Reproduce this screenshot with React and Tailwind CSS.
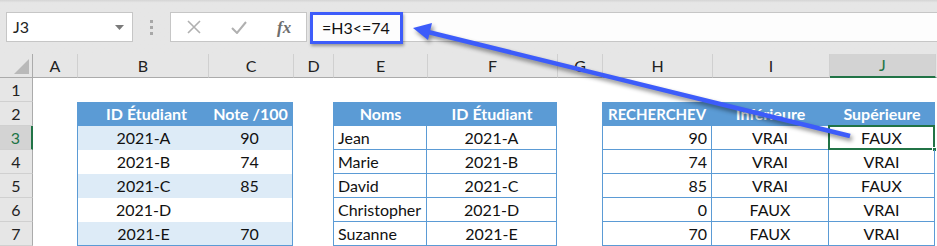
import React from "react";

const COLS =
  "grid-cols-[33px_45px_131px_85px_40px_94px_130px_45px_110px_117px_106px_1fr]";
const FONT = { fontFamily: "Lato, 'Open Sans', sans-serif" };

const letters = ["A", "B", "C", "D", "E", "F", "G", "H", "I", "J"];

function ColHeader({ l }) {
  const sel = l === "J";
  return (
    <div
      className={
        "flex items-center justify-center text-[16px] text-[#222] border-r border-[#d0d0d0] " +
        (sel
          ? "bg-[#d3d3d3] border-b-2 border-b-[#217346] text-[#217346]"
          : "bg-[#e6e6e6] border-b border-b-[#ababab]")
      }
    >
      {l}
    </div>
  );
}

function RowHeader({ n }) {
  const sel = n === 3;
  return (
    <div
      className={
        "h-full flex items-center justify-center text-[16px] border-b border-[#d0d0d0] " +
        (sel
          ? "bg-[#d3d3d3] border-r-2 border-r-[#217346] text-[#217346]"
          : "bg-[#e6e6e6] border-r border-r-[#ababab] text-[#222]")
      }
    >
      {n}
    </div>
  );
}

const t1 = [
  ["2021-A", "90"],
  ["2021-B", "74"],
  ["2021-C", "85"],
  ["2021-D", ""],
  ["2021-E", "70"],
];
const t2 = [
  ["Jean", "2021-A"],
  ["Marie", "2021-B"],
  ["David", "2021-C"],
  ["Christopher", "2021-D"],
  ["Suzanne", "2021-E"],
];
const t3 = [
  ["90", "VRAI", "FAUX"],
  ["74", "VRAI", "VRAI"],
  ["85", "VRAI", "FAUX"],
  ["0", "FAUX", "VRAI"],
  ["70", "FAUX", "VRAI"],
];

export default function App() {
  return (
    <div
      className="relative w-[937px] h-[246px] overflow-hidden bg-white text-[#111]"
      style={FONT}
    >
      {/* Formula bar area */}
      <div className="h-[54px] bg-gradient-to-b from-[#d4d4d4] via-[#e6e6e6] to-[#e6e6e6] from-0% via-[5%] flex items-start pt-[12px] pl-[6px]">
        <div className="w-[127px] h-[30px] bg-white border border-[#c6c6c6] flex items-center justify-between pl-[6px] pr-[8px] text-[16px] text-[#222]">
          <span>J3</span>
          <svg width="9" height="5" viewBox="0 0 9 5">
            <path d="M0 0 H9 L4.5 5 Z" fill="#7a7a7a" />
          </svg>
        </div>
        <div className="w-[37px] h-[30px] flex flex-col items-center justify-center gap-[3px]">
          <div className="w-[3px] h-[3px] bg-[#a8a8a8]" />
          <div className="w-[3px] h-[3px] bg-[#a8a8a8]" />
          <div className="w-[3px] h-[3px] bg-[#a8a8a8]" />
        </div>
        <div className="w-[137px] h-[30px] bg-white border border-[#c6c6c6] flex items-center">
          <div className="w-[46px] flex justify-center">
            <svg width="14" height="14" viewBox="0 0 14 14">
              <path d="M1 1 L13 13 M13 1 L1 13" stroke="#b0b0b0" strokeWidth="1.6" />
            </svg>
          </div>
          <div className="w-[46px] flex justify-center">
            <svg width="16" height="13" viewBox="0 0 16 13">
              <path d="M1 7 L6 12 L15 1" stroke="#b0b0b0" strokeWidth="2" fill="none" />
            </svg>
          </div>
          <div
            className="w-[44px] flex justify-center text-[17px] italic font-bold text-[#6e6e6e] leading-none"
            style={{ fontFamily: "'Liberation Serif', serif" }}
          >
            fx
          </div>
        </div>
        <div className="flex-1 h-[30px] ml-[3px] bg-[#fdfdfd] border-y border-[#c6c6c6] relative">
          <div className="absolute left-0 top-[-1px] w-[93px] h-[32px] border-[3px] border-[#3d5cfa] flex items-center pl-[9px] text-[16px] text-[#111] shadow-[1px_2px_3px_rgba(0,0,0,0.35)]">
            =H3&lt;=74
          </div>
        </div>
      </div>

      {/* Grid */}
      <div className={"grid " + COLS + " grid-rows-[repeat(8,24px)]"}>
        {/* corner */}
        <div className="bg-[#e6e6e6] border-r border-b border-[#ababab] relative">
          <svg className="absolute right-[3px] bottom-[3px]" width="15" height="15" viewBox="0 0 15 15">
            <path d="M15 0 V15 H0 Z" fill="#b9b9b9" />
          </svg>
        </div>
        {letters.map((l) => (
          <ColHeader key={l} l={l} />
        ))}
        <div className="bg-[#e6e6e6] border-b border-[#ababab]" />

        {[1, 2, 3, 4, 5, 6, 7].map((n) => (
          <div key={n} className="col-start-1" style={{ gridRowStart: n + 1 }}>
            <RowHeader n={n} />
          </div>
        ))}

        {/* Table 1 */}
        <div className="col-start-3 col-span-2 row-start-3 row-span-6 grid grid-cols-[131px_85px] grid-rows-[repeat(6,24px)] -ml-px">
          <div className="col-span-2 bg-[#5b9bd5] grid grid-cols-[131px_85px] text-white font-bold text-[16px]">
            <div className="flex items-center justify-center pl-[8px]">ID Étudiant</div>
            <div className="flex items-center justify-center">Note /100</div>
          </div>
          {t1.map((r, i) => (
            <div
              key={i}
              className={
                "col-span-2 grid grid-cols-[131px_85px] text-[16px] border-x border-[#5b9bd5] " +
                (i % 2 === 0 ? "bg-[#ddebf7] " : "bg-white ") +
                (i === 4 ? "border-b" : "")
              }
            >
              <div className="flex items-center justify-center">{r[0]}</div>
              <div className="flex items-center justify-center pr-[4px]">{r[1]}</div>
            </div>
          ))}
        </div>

        {/* Table 2 */}
        <div className="col-start-6 col-span-2 row-start-3 row-span-6 grid grid-cols-[94px_130px] grid-rows-[repeat(6,24px)] -ml-px">
          <div className="bg-[#5b9bd5] text-white font-bold text-[16px] flex items-center justify-center border-l border-[#5b9bd5]">
            Noms
          </div>
          <div className="bg-[#5b9bd5] text-white font-bold text-[16px] flex items-center justify-center">
            ID Étudiant
          </div>
          {t2.map((r, i) => (
            <React.Fragment key={i}>
              <div className="flex items-center pl-[4px] text-[16px] border-l border-r border-b border-[#5b9bd5]">
                {r[0]}
              </div>
              <div className="flex items-center justify-center text-[16px] border-r border-b border-[#5b9bd5]">
                {r[1]}
              </div>
            </React.Fragment>
          ))}
        </div>

        {/* Table 3 */}
        <div className="col-start-9 col-span-3 row-start-3 row-span-6 grid grid-cols-[110px_117px_106px] grid-rows-[repeat(6,24px)] -ml-px">
          <div className="bg-[#5b9bd5] text-white font-bold text-[15px] flex items-center pl-[6px]">
            RECHERCHEV
          </div>
          <div className="bg-[#5b9bd5] text-white font-bold text-[16px] flex items-center justify-center">
            Inférieure
          </div>
          <div className="bg-[#5b9bd5] text-white font-bold text-[16px] flex items-center justify-center">
            Supérieure
          </div>
          {t3.map((r, i) => (
            <React.Fragment key={i}>
              <div className="flex items-center justify-end pr-[4px] text-[16px] border-l border-r border-b border-[#5b9bd5]">
                {r[0]}
              </div>
              <div className="flex items-center justify-center text-[16px] border-r border-b border-[#5b9bd5]">
                {r[1]}
              </div>
              <div className="relative flex items-center justify-center text-[16px] border-r border-b border-[#5b9bd5]">
                {r[2]}
                {i === 0 && (
                  <div className="absolute left-[-1px] top-[-1px] right-[-1px] bottom-[-1px] border-2 border-[#217346]">
                    <div className="absolute right-[-4px] bottom-[-4px] w-[5px] h-[5px] bg-[#217346] border border-white" />
                  </div>
                )}
              </div>
            </React.Fragment>
          ))}
        </div>
      </div>

      {/* Arrow overlay */}
      <svg
        className="absolute inset-0 pointer-events-none drop-shadow-[2px_3px_2px_rgba(0,0,0,0.45)]"
        width="937"
        height="246"
        viewBox="0 0 937 246"
      >
        <line x1="850" y1="136" x2="428" y2="32" stroke="#3d5cfa" strokeWidth="4.5" />
        <polygon points="413,28 432,23 428,40" fill="#3d5cfa" />
      </svg>
    </div>
  );
}
